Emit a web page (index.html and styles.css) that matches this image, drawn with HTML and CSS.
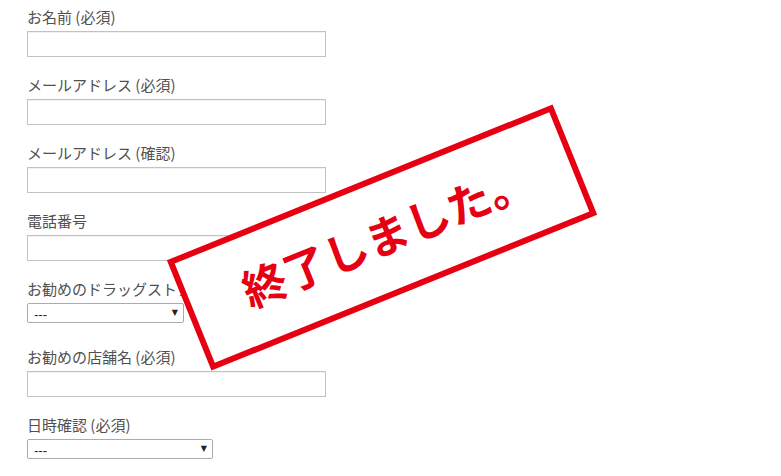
FILE: index.html
```html
<!DOCTYPE html>
<html lang="ja">
<head>
<meta charset="utf-8">
<title>フォーム</title>
<link rel="stylesheet" href="styles.css">
</head>
<body>
<main class="page">
  <form class="form">
    <div class="field">
      <label class="label">お名前 (必須)</label>
      <input class="text" type="text">
    </div>
    <div class="field">
      <label class="label">メールアドレス (必須)</label>
      <input class="text" type="text">
    </div>
    <div class="field">
      <label class="label">メールアドレス (確認)</label>
      <input class="text" type="text">
    </div>
    <div class="field field-tel">
      <label class="label">電話番号</label>
      <input class="text" type="text">
    </div>
    <div class="field field-select">
      <label class="label">お勧めのドラッグストア (必須)</label>
      <span class="select-wrap select-store">
        <select class="select"><option>---</option></select>
      </span>
    </div>
    <div class="field">
      <label class="label">お勧めの店舗名 (必須)</label>
      <input class="text" type="text">
    </div>
    <div class="field field-select">
      <label class="label">日時確認 (必須)</label>
      <span class="select-wrap select-date">
        <select class="select"><option>---</option></select>
      </span>
    </div>
  </form>
  <div class="stamp">
    <span class="stamp-text">終了しました。</span>
  </div>
</main>
</body>
</html>
```
FILE: styles.css
```css
html, body {
  margin: 0;
  padding: 0;
  background: #ffffff;
}

.page {
  position: relative;
  width: 781px;
  height: 476px;
  overflow: hidden;
}

.form {
  display: flex;
  flex-direction: column;
  padding: 7px 0 0 27px;
  font-family: "Noto Sans CJK JP", "Noto Sans", sans-serif;
}

.field {
  display: flex;
  flex-direction: column;
  align-items: flex-start;
  margin-bottom: 18px;
}

.field-select {
  margin-bottom: 24px;
}

.label {
  display: block;
  font-size: 15px;
  line-height: 20px;
  color: #505050;
  white-space: nowrap;
}

.text {
  display: block;
  box-sizing: border-box;
  width: 299px;
  height: 26px;
  margin: 4px 0 0;
  padding: 0 6px;
  border: 1px solid #c2c2c2;
  box-shadow: inset 0 1px 1px rgba(0, 0, 0, 0.06);
  background: #ffffff;
  outline: none;
}

.select-wrap {
  position: relative;
  display: block;
  margin-top: 4px;
  height: 20px;
}

.select-store { width: 157px; }
.select-date { width: 186px; }

.select {
  display: block;
  -webkit-appearance: none;
  appearance: none;
  box-sizing: border-box;
  width: 100%;
  height: 20px;
  margin: 0;
  padding: 2px 0 0 6px;
  border: 1px solid #ababab;
  border-radius: 2px;
  background: #ffffff;
  font-family: "Liberation Sans", sans-serif;
  font-size: 13px;
  color: #222222;
}

.select-wrap::after {
  content: "▼";
  position: absolute;
  right: 6px;
  top: 5px;
  font-family: "DejaVu Sans", sans-serif;
  font-size: 8px;
  line-height: 10px;
  color: #222222;
  pointer-events: none;
}

.stamp {
  position: absolute;
  left: 174px;
  top: 178px;
  box-sizing: border-box;
  width: 416px;
  height: 119px;
  border: 6px solid #e60012;
  background: #ffffff;
  transform: rotate(-22deg);
  display: flex;
  align-items: center;
  justify-content: center;
}

.stamp-text {
  font-family: "Noto Sans CJK JP", sans-serif;
  font-weight: 700;
  font-size: 44px;
  line-height: 1;
  color: #e60012;
  padding: 0 0 6px 11px;
  white-space: nowrap;
}
```
